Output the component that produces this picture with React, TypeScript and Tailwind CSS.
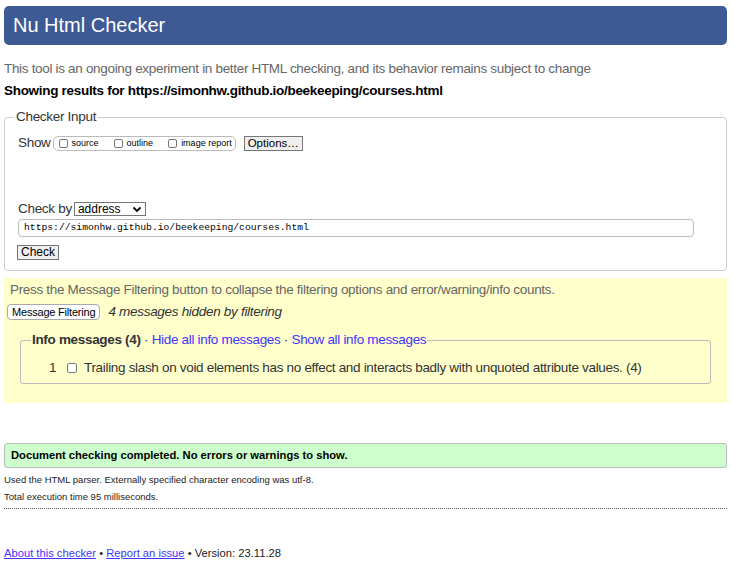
export default function App() {
  return (
    <div className="bg-white min-h-[568px] pl-[4px] pr-[6px] pt-[6px] text-black" style={{ fontFamily: '"Liberation Sans", Arial, sans-serif' }}>
      <h1 className="h-[39px] rounded-[5px] bg-[#3e5a95] text-white text-[20px] leading-[39px] pl-[9px]">
        Nu Html Checker
      </h1>

      <p className="mt-[16px] text-[13.5px] tracking-[-0.32px] leading-[16px] text-[#666]">
        This tool is an ongoing experiment in better HTML checking, and its behavior remains subject to change
      </p>
      <p className="mt-[6px] text-[13.5px] leading-[16px] font-bold tracking-[-0.3px]">
        Showing results for https://simonhw.github.io/beekeeping/courses.html
      </p>

      <fieldset className="mt-[10px] border border-[#ccc] rounded-[4px] pl-[13px] pr-[32px] pb-[10px]">
        <legend className="-ml-[4px] px-[2px] text-[13.5px] tracking-[-0.3px] leading-[16px] text-[#333]">Checker Input</legend>

        <div className="mt-[10px] flex items-center h-[16px]">
          <span className="text-[13.5px] tracking-[-0.3px] text-[#333] mr-[2px]">Show</span>
          <div className="flex items-center h-[15px] border border-[#bbb] rounded-[5px] pl-[5px] pr-[3px] gap-[15px] whitespace-nowrap">
            <label className="flex items-center gap-[4px] text-[9px] leading-[10px]">
              <span className="w-[9px] h-[9px] border border-[#777] rounded-[2px] bg-white" />
              source
            </label>
            <label className="flex items-center gap-[4px] text-[9px] leading-[10px]">
              <span className="w-[9px] h-[9px] border border-[#777] rounded-[2px] bg-white" />
              outline
            </label>
            <label className="flex items-center gap-[4px] text-[9px] leading-[10px]">
              <span className="w-[9px] h-[9px] border border-[#777] rounded-[2px] bg-white" />
              image report
            </label>
          </div>
          <button className="ml-[8px] h-[15px] px-[3px] border border-[#767676] bg-[#efefef] text-[11.5px] leading-[13px]">
            Options…
          </button>
        </div>

        <div className="mt-[50px] flex items-center h-[16px]">
          <span className="text-[13.5px] tracking-[-0.3px] text-[#333] mr-[2px]">Check by</span>
          <div className="flex items-center justify-between w-[72px] h-[14px] border border-[#767676] px-[3px] text-[12px] leading-[12px] bg-white">
            address
            <svg width="10" height="7" viewBox="0 0 10 7">
              <path d="M1.5 1.5 L5 5 L8.5 1.5" fill="none" stroke="#000" strokeWidth="1.8" />
            </svg>
          </div>
        </div>
        <div className="mt-[2px] h-[18px] border border-[#bbb] rounded-[4px] pl-[5px] flex items-center text-[9.7px]" style={{ fontFamily: '"Liberation Mono", monospace' }}>
          https://simonhw.github.io/beekeeping/courses.html
        </div>
        <button className="mt-[8px] -ml-[1px] h-[15px] px-[3px] border border-[#767676] bg-[#efefef] text-[12px] leading-[13px] block">
          Check
        </button>
      </fieldset>

      <div className="mt-[7px] bg-[#ffffcc] h-[125px] pt-[4px] px-[6px]">
        <p className="text-[13.5px] tracking-[-0.32px] leading-[16px] text-[#666]">
          Press the Message Filtering button to collapse the filtering options and error/warning/info counts.
        </p>
        <div className="mt-[6px] flex items-center h-[16px] -ml-[3px]">
          <button className="h-[16px] px-[4px] border border-[#aaa] rounded-[4px] bg-white text-[11px] leading-[14px] tracking-[-0.2px]">
            Message Filtering
          </button>
          <span className="ml-[8px] text-[13.5px] tracking-[-0.3px] italic text-[#333]">4 messages hidden by filtering</span>
        </div>
        <fieldset className="mt-[12px] ml-[10px] mr-[10px] border border-[#bbb] rounded-[3px] h-[52px]">
          <legend className="ml-[10px] px-[1px] text-[13.5px] tracking-[-0.32px] leading-[16px]">
            <span className="font-bold text-[#333]">Info messages (4)</span>
            <span className="text-[#333]"> · </span>
            <a className="text-[#4433ff]">Hide all info messages</a>
            <span className="text-[#333]"> · </span>
            <a className="text-[#4433ff]">Show all info messages</a>
          </legend>
          <div className="mt-[12px] flex items-center text-[13.5px] tracking-[-0.32px] leading-[16px] text-[#333]">
            <span className="ml-[28px] w-[10px]">1</span>
            <span className="ml-[8px] w-[10px] h-[10px] border border-[#777] rounded-[2px] bg-white" />
            <span className="ml-[7px]">Trailing slash on void elements has no effect and interacts badly with unquoted attribute values. (4)</span>
          </div>
        </fieldset>
      </div>

      <div className="mt-[40px] h-[25px] border border-[#bbb] rounded-[3px] bg-[#ccffcc] flex items-center pl-[6px] text-[11.2px] font-bold">
        Document checking completed. No errors or warnings to show.
      </div>
      <p className="mt-[3px] text-[9.5px] leading-[17px] text-[#222]">
        Used the HTML parser. Externally specified character encoding was utf-8.
      </p>
      <p className="text-[9.5px] leading-[17px] text-[#222]">Total execution time 95 milliseconds.</p>
      <div className="mt-[3px] border-t border-dotted border-[#555]" />

      <p className="mt-[37px] text-[11.2px] leading-[14px] text-[#222]">
        <a className="text-[#4433ff] underline">About this checker</a>
        {" • "}
        <a className="text-[#4433ff] underline">Report an issue</a>
        {" • Version: 23.11.28"}
      </p>
    </div>
  );
}
